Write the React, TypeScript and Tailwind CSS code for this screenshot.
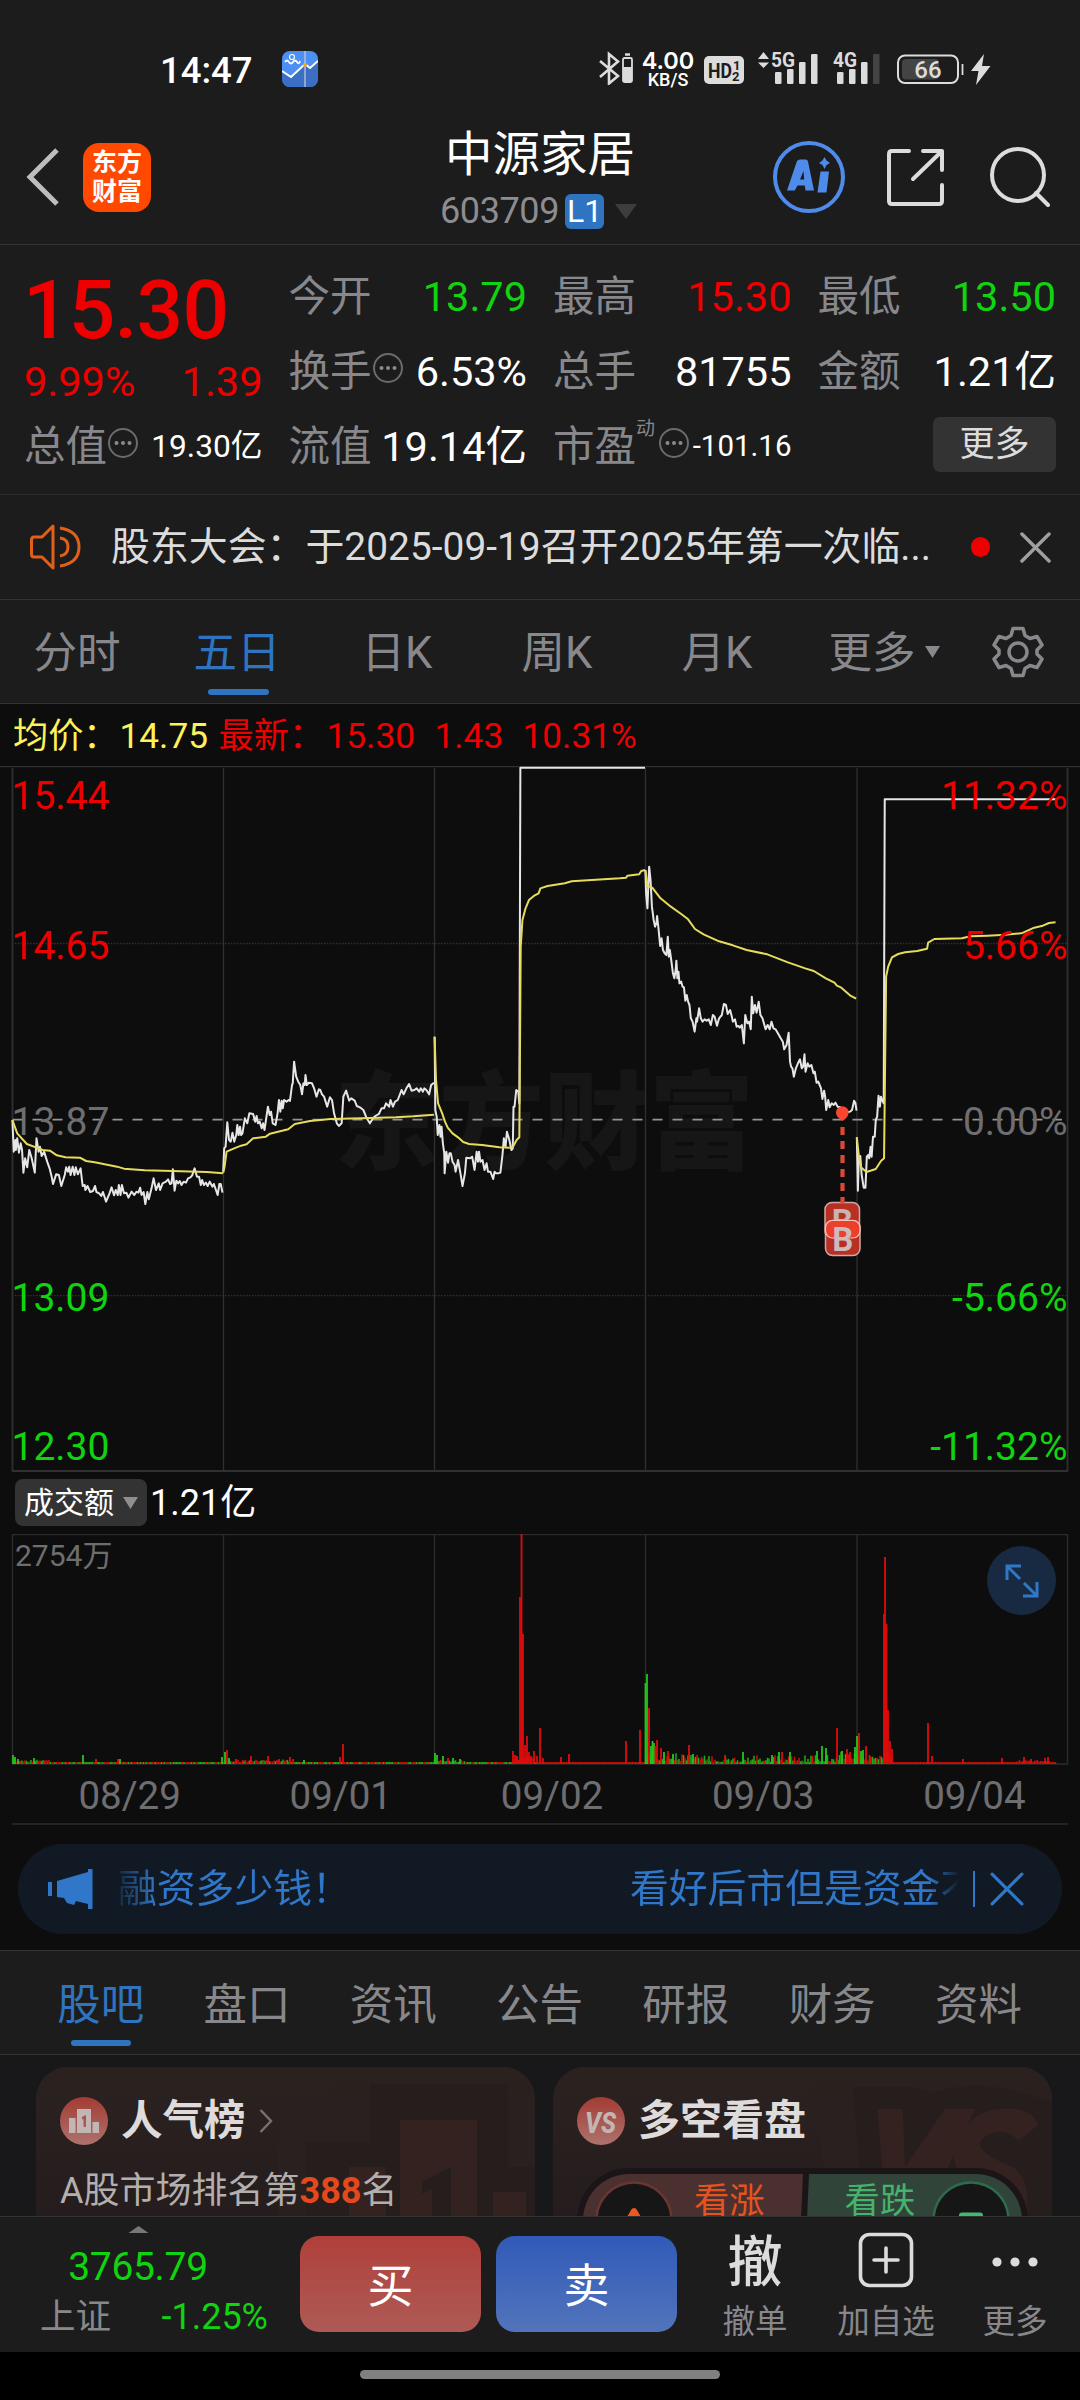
import React from "react";

const UP = "#ee0000";
const DOWN = "#0fd40f";

/* ---------- small drawings ---------- */

function Dots({ className = "" }: { className?: string }) {
  return (
    <svg viewBox="0 0 32 32" className={`h-8 w-8 shrink-0 ${className}`} fill="none">
      <circle cx="16" cy="16" r="14" stroke="#6b6b6e" strokeWidth="2" />
      <g fill="#8a8a8e">
        <circle cx="9.5" cy="16" r="2" />
        <circle cx="16" cy="16" r="2" />
        <circle cx="22.5" cy="16" r="2" />
      </g>
    </svg>
  );
}

function Close({ className, color, width }: { className: string; color: string; width: number }) {
  return (
    <svg viewBox="0 0 32 32" className={className} fill="none" stroke={color} strokeWidth={width} strokeLinecap="round">
      <path d="M2 2 30 30M30 2 2 30" />
    </svg>
  );
}

function Signal({ label, weak, arrows }: { label: string; weak?: boolean; arrows?: boolean }) {
  return (
    <svg viewBox="0 0 62 34" className="h-[34px] w-[62px] shrink-0 overflow-visible" fill="#dcdcdc">
      {arrows && <path d="M0 8 5.5 1 11 8ZM0 11.500 5.500 17 11 11.500Z" />}
      <text x="13" y="16" fontSize="20" fontWeight="700" textLength="24" lengthAdjust="spacingAndGlyphs">
        {label}
      </text>
      <rect x="17" y="21" width="6.500" height="12" rx="1.200" />
      <rect x="29" y="18" width="6.500" height="15" rx="1.200" />
      <rect x="41" y="11" width="6.500" height="22" rx="1.200" />
      <rect x="53" y="3" width="6.500" height="30" rx="1.200" fill={weak ? "#444" : "#dcdcdc"} />
    </svg>
  );
}

/* ---------- top ---------- */

function StatusBar() {
  return (
    <div className="flex h-[138px] items-start pt-[51px] pl-[160px] text-white">
      <div className="w-[122px] text-[36.500px] leading-[39px] font-medium">14:47</div>
      <svg viewBox="0 0 36 36" className="h-9 w-9">
        <defs>
          <clipPath id="appIcon">
            <rect width="36" height="36" rx="8" />
          </clipPath>
        </defs>
        <g clipPath="url(#appIcon)">
          <rect width="36" height="36" fill="#4d90f5" />
          <path d="M0 20 9 26 23 13 28 17 36 10V36H0Z" fill="#3a6fc4" />
          <path d="M0 20 9 26 23 13 28 17 36 10" fill="none" stroke="#fff" strokeWidth="2" />
          <path d="M23 0V36" stroke="#c9ced6" strokeWidth="1.200" />
          <circle cx="23" cy="14" r="2" fill="#f0a030" />
          <circle cx="10" cy="6" r="2.500" fill="none" stroke="#fff" strokeWidth="1.200" />
          <path d="M3 11q2-3 4 0t4 0 4 0 3-1" fill="none" stroke="#fff" strokeWidth="1.800" />
        </g>
      </svg>
      <svg viewBox="0 0 36 34" className="ml-[280px] h-[34px] w-9" fill="none">
        <path d="M2 10 20 25 11 32.500V3L20 10.500 2 26" stroke="#dcdcdc" strokeWidth="2.600" />
        <rect x="25" y="7" width="9" height="24" rx="1.500" stroke="#dcdcdc" strokeWidth="1.800" />
        <rect x="25" y="16" width="9" height="15" fill="#dcdcdc" />
        <path d="M27 3.500H32" stroke="#dcdcdc" strokeWidth="2.500" />
      </svg>
      <div className="ml-[7px] flex w-[54px] flex-col items-center">
        <span className="font-[Inter] text-[23.500px] leading-[20px] font-semibold">4.00</span>
        <span className="text-[18px] leading-[18px] font-medium">KB/S</span>
      </div>
      <svg viewBox="0 0 40 28" className="mt-[5px] ml-[9px] h-7 w-10 shrink-0">
        <rect width="40" height="28" rx="5" fill="#dcdcdc" />
        <g fill="#1c1c1c" fontWeight="700">
          <text x="4" y="22" fontSize="21" textLength="24" lengthAdjust="spacingAndGlyphs">HD</text>
          <text x="29" y="13.500" fontSize="13">1</text>
          <text x="28" y="25" fontSize="13">2</text>
        </g>
      </svg>
      <div className="ml-[14px] flex">
        <Signal label="5G" arrows />
        <Signal label="4G" weak />
      </div>
      <svg viewBox="0 0 100 34" className="ml-[14px] h-[34px] w-[100px] shrink-0" fill="none">
        <rect x="2" y="4.500" width="60" height="27.500" rx="7" stroke="#dcdcdc" strokeWidth="2" />
        <rect x="6" y="8" width="37" height="20.500" rx="4" fill="#444" />
        <path d="M66.500 13V24" stroke="#dcdcdc" strokeWidth="1.800" />
        <text x="32" y="27" textAnchor="middle" fill="#dcdcdc" fontSize="24" fontWeight="500">66</text>
        <path d="M88 3 75 20H82.500L80 34 94.500 15H86Z" fill="#dcdcdc" />
      </svg>
    </div>
  );
}

function Header() {
  return (
    <div className="flex h-[106px] items-start">
      <svg viewBox="0 0 34 58" className="mt-[10px] ml-[26px] h-[58px] w-[34px]" fill="none">
        <path d="M31 2 4 29 31 56" stroke="#bdbdbd" strokeWidth="5" />
      </svg>
      <div className="mt-[5px] ml-[23px] flex h-[69px] w-[68px] flex-col items-center justify-center rounded-2xl bg-[#ff4800] text-[25px] leading-[29px] font-bold text-white">
        <span className="-mt-[2px]">东方</span>
        <span>财富</span>
      </div>
      <div className="ml-[239px] flex w-[300px] flex-col items-center">
        <div className="-mt-[13px] text-[47.500px] leading-[60px] text-white">中源家居</div>
        <div className="mt-[8px] -ml-[3px] flex h-[36px] items-center">
          <span className="text-[36px] leading-9 tracking-[-0.400px] text-[#8c8c91]">603709</span>
          <span className="ml-[6px] flex h-[35px] w-[39px] items-center justify-center rounded-[6px] bg-[#2f74c0] text-[32px] leading-[35px] text-white">
            L1
          </span>
          <svg viewBox="0 0 22 15" className="ml-[11px] h-[15px] w-[22px]">
            <path d="M0 0H22L11 15Z" fill="#3d3d3d" />
          </svg>
        </div>
      </div>
      <svg viewBox="0 0 74 74" className="mt-[2px] ml-[81.500px] h-[74px] w-[74px] shrink-0" fill="none">
        <circle cx="37" cy="37" r="34" stroke="#4f8bea" strokeWidth="4" />
        <path
          fillRule="evenodd"
          d="M25 21Q26 19.500 28 19.500H33.500Q35.500 19.500 36 21.500L42 50.500H33.500L32.800 45.500H25.500L22.800 50.500H15ZM31.500 31 28 39.500H32.200Z"
          fill="#4f8bea"
        />
        <path d="M48.500 31.500H57L54.500 52.500H45.500ZM52.500 17 54.500 20.500 58 23 54.500 25 52.500 29 50.500 25 47 23 50.500 20.500Z" fill="#4f8bea" />
      </svg>
      <svg viewBox="0 0 62 62" className="mt-[9px] ml-[39.500px] h-[62px] w-[62px] shrink-0" fill="none" stroke="#dcdcdc" strokeWidth="4" strokeLinecap="round" strokeLinejoin="round">
        <path d="M24 4H7Q4 4 4 7V54Q4 57 7 57H54Q57 57 57 54V38M38 4H57V23M56 5 28 32" />
      </svg>
      <svg viewBox="0 0 62 62" className="mt-[9px] ml-[41px] h-[62px] w-[62px] shrink-0" fill="none" stroke="#dcdcdc" strokeWidth="4" strokeLinecap="round">
        <circle cx="30" cy="28" r="26" />
        <path d="M48 46 60 58" />
      </svg>
    </div>
  );
}

function Field({ label, value, color = "#fff", info, sup, size = 41.5 }: { label: string; value: string; color?: string; info?: boolean; sup?: string; size?: number }) {
  return (
    <div className="flex h-[75px] items-center justify-between whitespace-nowrap">
      <div className="flex items-center text-[41.500px] leading-none text-[#88888c]">
        {label}
        {sup && <span className="-mt-9 mr-[3px] text-[19px]">{sup}</span>}
        {info && <Dots className="-mt-2" />}
      </div>
      <span className="leading-none" style={{ color, fontSize: size }}>
        {value}
      </span>
    </div>
  );
}

function Quote() {
  return (
    <div className="grid h-[250px] grid-cols-4 gap-[26px] border-t border-[#333] px-[24px] pt-[14px]">
      <div>
        <div className="mt-[10px] -ml-[1px] flex h-[82px] items-center text-[82px] leading-none font-medium tracking-[-0.800px] text-[#ee0000]">15.30</div>
        <div className="mt-[2px] mb-[-2px] flex h-[58px] items-center justify-between text-[41.500px] leading-none text-[#ee0000]">
          <span>9.99%</span>
          <span>1.39</span>
        </div>
        <Field label="总值" value="19.30亿" info size={31.7} />
      </div>
      <div>
        <Field label="今开" value="13.79" color={DOWN} />
        <Field label="换手" value="6.53%" info />
        <Field label="流值" value="19.14亿" />
      </div>
      <div>
        <Field label="最高" value="15.30" color={UP} />
        <Field label="总手" value="81755" />
        <Field label="市盈" value="-101.16" sup="动" info size={29.5} />
      </div>
      <div>
        <Field label="最低" value="13.50" color={DOWN} />
        <Field label="金额" value="1.21亿" />
        <div className="-mt-[2px] flex h-[75px] items-center justify-end">
          <div className="flex h-[55px] w-[123px] items-center justify-center rounded-[7px] bg-[#333] text-[35px] leading-none text-[#dcdcdc]">更多</div>
        </div>
      </div>
    </div>
  );
}

function Notice() {
  return (
    <div className="flex h-[105px] items-center border-t border-[#2a2a2a] pl-[29px]">
      <svg viewBox="0 0 52 46" className="h-[46px] w-[52px]" fill="none" stroke="#e0601a" strokeWidth="3" strokeLinejoin="round">
        <path d="M24 2V44L13 33H5Q2.500 33 2.500 30V16Q2.500 13 5 13H13ZM31 4Q50 7 50 23T31 42M31 14Q39 15 39 23T31 32" />
      </svg>
      <div className="ml-[30px] w-[858px] text-[38.900px] leading-none whitespace-nowrap text-[#dcdcdc]">股东大会：于2025-09-19召开2025年第一次临...</div>
      <div className="ml-[2px] h-5 w-[19px] rounded-full bg-[#ee0000]" />
      <Close className="ml-[30px] h-[31px] w-[31px]" color="#a0a0a0" width={3.5} />
    </div>
  );
}

function ChartTabs() {
  const tabs = ["分时", "五日", "日K", "周K", "月K", "更多"];
  return (
    <div className="flex h-[104px] items-center border-t border-[#333] text-[43.500px] leading-none text-[#88888c]">
      <div className="-ml-[3px] flex h-full">
        {tabs.map((t) => (
          <div key={t} className="relative flex h-full w-[160px] items-center justify-center pt-[4px]">
            <span className={t === "五日" ? "text-[#2f74c0]" : t === "更多" ? "ml-[14px]" : ""}>{t}</span>
            {t === "五日" && <div className="absolute bottom-[8px] left-[51px] h-[6px] w-[61px] rounded-full bg-[#2f74c0]" />}
            {t === "更多" && (
              <svg viewBox="0 0 15 12" className="-mt-[4px] ml-[9px] h-3 w-[15px]">
                <path d="M0 0H15L7.500 12Z" fill="#88888c" />
              </svg>
            )}
          </div>
        ))}
      </div>
      <svg viewBox="0 0 52 52" className="ml-[35px] h-[52px] w-[52px]" fill="none" stroke="#88888c" strokeWidth="3.500" strokeLinejoin="round">
        <path d="M21 2.500H31L33 9.500 38 12.500 45 10.500 50 19 45 24V28L50 33 45 41.500 38 39.500 33 42.500 31 49.500H21L19 42.500 14 39.500 7 41.500 2 33 7 28V24L2 19 7 10.500 14 12.500 19 9.500Z" />
        <circle cx="26" cy="26" r="9" />
      </svg>
    </div>
  );
}

/* ---------- chart ---------- */

const PRICE_LEFT = [
  "36,1080 40,1175 45,1140 46,1170 50,1135 55,1178 60,1150 64,1170 68,1238 73,1195 79,1222 85,1170 92,1195 101,1238 106,1135 112,1175 116,1160 121,1188 128,1175 137,1205 144,1225 150,1250 154,1272 163,1243 171,1245 178,1278 188,1245 192,1222 197,1235 201,1220 205,1245 211,1220 216,1245 220,1222 226,1243 234,1225 240,1278 246,1275 248,1290 254,1278 262,1296 270,1293 276,1278 280,1296 288,1300 294,1308 299,1296 308,1325 318,1300 324,1282 331,1306 336,1290 342,1305 345,1275 350,1305 354,1275 360,1300 367,1298 373,1313 382,1295 390,1305 396,1295 402,1298 407,1283 411,1305 417,1296 422,1332 428,1296 432,1318 440,1285 446,1255 453,1290 461,1270 465,1290 472,1270 482,1265 488,1258 494,1272 498,1270 502,1228 507,1292 512,1262 517,1270 522,1263 527,1275 533,1265 540,1268 546,1255 553,1252 558,1246 565,1225 572,1250 578,1250 583,1275 587,1260 592,1275 598,1268 603,1278 609,1265 617,1280 621,1272 627,1290 632,1305 637,1272 641,1272 646,1298",
  "648,1235 651,1165 655,1160 660,1087 665,1140 670,1145 675,1118 680,1145 686,1125 689,1095 693,1125 697,1100 700,1125 704,1120 711,1075 718,1090 724,1060 735,1062 741,1085 745,1068 749,1090 754,1085 760,1105 764,1090 768,1110 773,1075 778,1040 783,1065 787,1055 792,1090 800,1095 806,1060 810,1020 814,1055 818,1022 821,1045 825,1020 832,1025 838,1020 842,1023 848,975 850,970 854,905 860,950 866,965 872,975 877,1003 881,970 885,975 887,945 891,975 897,968 906,970 912,985 919,1010 926,988 930,990 935,1003 941,1010 950,1040 958,1012 964,1020 970,1060 978,1090 984,1098 992,1090 997,1010 1005,992 1014,1022 1020,1015 1030,1022 1036,1038 1045,1042 1055,1050 1065,1075 1074,1090 1083,1075 1090,1068 1100,1062 1108,1045 1115,1045 1121,1030 1130,1040 1134,1020 1141,1040 1147,1025 1155,1020 1166,990 1172,1003 1180,985 1188,972 1195,992 1203,990 1210,985 1217,995 1222,985 1228,995 1232,985 1238,990 1246,1003 1252,975 1260,968",
  "1262,830 1264,1050 1268,1070 1271,1125 1276,1095 1279,1130 1282,1100 1286,1150 1290,1180 1291,1240 1296,1175 1301,1208 1305,1180 1309,1180 1314,1205 1320,1215 1323,1235 1330,1200 1337,1240 1343,1278 1350,1240 1354,1193 1365,1195 1371,1190 1378,1230 1384,1175 1388,1205 1391,1175 1395,1205 1401,1200 1407,1230 1413,1210 1417,1235 1424,1235 1432,1257 1436,1235 1440,1240 1447,1240 1453,1238 1459,1185 1463,1135 1468,1160 1472,1115 1479,1140 1485,1170 1489,1165 1491,1040 1494,1040 1499,990 1505,995 1508,1030 1511,23 1873,23",
];
const AVG_LEFT = [
  "36,1080 50,1120 78,1152 106,1163 124,1170 145,1172 165,1186 190,1192 232,1193 250,1203 275,1207 340,1220 360,1226 420,1231 500,1233 600,1236 648,1240",
  "648,1238 652,1220 658,1175 680,1165 700,1157 716,1153 735,1135 772,1130 784,1121 837,1108 856,1092 900,1083 960,1077 1050,1075 1150,1072 1200,1069 1260,1064",
  "1262,830 1266,960 1272,1030 1284,1060 1292,1085 1300,1103 1314,1120 1330,1132 1345,1146 1362,1152 1400,1155 1450,1162 1480,1163 1490,1160 1500,1140 1508,1132 1512,560 1517,480 1526,445 1536,420 1550,408 1564,400 1569,385 1590,378 1640,370 1660,364 1800,355 1818,353 1822,347 1856,343 1862,333 1873,330",
];
const PRICE_RIGHT = [
  "306,330 308,400 312,445 314,390 317,320 321,360 325,440 330,480 334,500 338,490 340,468 344,505 349,558 353,535 357,570 362,580 367,585 371,530 374,590 377,570 381,600 386,640 390,655 394,630 396,602 399,655 402,635 405,670 410,665 414,680 418,682 422,722 426,705 430,725 434,735 438,775 443,785 449,815 454,775 456,785 462,745 467,775 472,785 478,778 484,782 490,778 496,795 502,765 507,770 514,797 520,775 528,765 534,732 540,735 545,762 552,750 557,770 560,785 566,778 571,800 576,798 580,803 586,795 592,850 596,765 602,790 607,785 612,808 615,710 619,760 624,735 629,758 635,725 640,765 646,775 655,808 661,795 667,808 672,785 678,805 684,808 692,822 699,835 705,845 709,868 716,855 722,818 726,905 729,920 733,925 737,950 743,925 749,910 755,898 760,925 764,920 768,883 771,935 777,910 782,920 788,915 794,940 798,935 803,968 808,965 812,975 816,985 820,1017 825,992 828,1010 831,1050 837,1020 841,1042 847,1030 853,1035 858,1028 864,1040 872,1042 878,1050 890,1058 900,1055 906,1050 912,1022 916,1030 919,1052",
  "920,1132 923,1292 926,1190 930,1188 934,1245 940,1283 945,1283 949,1190 953,1185 956,1195 960,1160 963,1190 967,1130 972,1130 975,1080 979,1070 983,1007 987,1040 990,1010 993,1020 998,1030 1001,118 1498,118",
];
const AVG_RIGHT = [
  "306,330 312,378 326,383 350,415 380,440 410,462 430,478 450,507 475,523 520,544 560,556 600,570 660,583 720,607 770,625 795,633 830,655 855,668 862,677 875,683 900,706 918,716",
  "920,1132 926,1190 932,1222 948,1236 975,1227 990,1203 999,1195 1005,650 1011,620 1022,592 1040,582 1060,577 1095,573 1124,566 1127,548 1145,537 1225,535 1250,529 1300,527 1350,524 1398,520 1435,503 1460,497 1478,489 1497,487",
];

const GRID_X = [223.5, 434.5, 645.5, 857];

function Lines({ data, color }: { data: string[]; color: string }) {
  return (
    <>
      {data.map((points) => (
        <polyline key={points.slice(0, 12)} points={points} fill="none" stroke={color} strokeWidth="2" strokeLinejoin="round" vectorEffect="non-scaling-stroke" />
      ))}
    </>
  );
}

function PriceChart() {
  const left: [string, number, string][] = [
    ["15.44", 809.3, UP],
    ["14.65", 959.3, UP],
    ["13.87", 1134.7, "#6e6e70"],
    ["13.09", 1310.7, DOWN],
    ["12.30", 1460, DOWN],
  ];
  const right: [string, number, string][] = [
    ["11.32%", 809.3, UP],
    ["5.66%", 959.3, UP],
    ["0.00%", 1134.7, "#6e6e70"],
    ["-5.66%", 1310.7, DOWN],
    ["-11.32%", 1460, DOWN],
  ];
  return (
    <svg viewBox="0 766 1080 707" className="block h-[707px] w-[1080px]">
      <text x="334" y="1161" fontSize="107" fontWeight="900" fill="#161616" textLength="420" lengthAdjust="spacingAndGlyphs">东方财富</text>
      <g stroke="#303030" strokeWidth="1.300" fill="none">
        <path d="M0 766.500H1080" />
        {GRID_X.map((x) => (
          <path key={x} d={`M${x} 768V1471`} />
        ))}
        <path d="M12.500 768V1471H1067.500V768" strokeWidth="1.800" />
        <path d="M12 943.500H1067M12 1295.700H1067" strokeDasharray="1.500 1.500" />
      </g>
      <path d="M12.500 1119.700H1062" stroke="#959595" strokeWidth="1.700" strokeDasharray="10 10" />
      <g transform="translate(0 760) scale(.34439 .33333)">
        <Lines data={PRICE_LEFT} color="#e6e6e6" />
        <Lines data={AVG_LEFT} color="#e6dc5c" />
      </g>
      <g transform="translate(540 760) scale(.34439 .33333)">
        <Lines data={PRICE_RIGHT} color="#e6e6e6" />
        <Lines data={AVG_RIGHT} color="#e6dc5c" />
      </g>
      <g fontSize="39">
        {left.map(([t, y, c]) => (
          <text key={t} x="11.500" y={y} fill={c}>{t}</text>
        ))}
        {right.map(([t, y, c]) => (
          <text key={t} x="1067.500" y={y} fill={c} textAnchor="end">{t}</text>
        ))}
      </g>
      <path d="M842.500 1121Q836 1117 836 1112.500A6.300 6.300 0 0 1 848.600 1112.500Q848.600 1117 842.500 1121Z" fill="#fb4632" />
      <rect x="825" y="1202.500" width="34.500" height="36" rx="7" fill="#b83024" stroke="#cfa8a4" strokeWidth="1.500" />
      <text x="842.300" y="1232.500" textAnchor="middle" fontSize="33" fontWeight="700" fill="#c9b4b4">B</text>
      <path d="M842.500 1127V1204" stroke="#dd4836" strokeWidth="4.200" strokeDasharray="8 6" />
      <rect x="825.500" y="1220.500" width="34.500" height="35" rx="7" fill="#b83024" stroke="#cfa8a4" strokeWidth="1.500" />
      <rect x="825.500" y="1220.500" width="34.500" height="17.500" rx="7" fill="#ee3e2c" stroke="#f3c5be" strokeWidth="1.200" />
      <text x="842.800" y="1250.500" textAnchor="middle" fontSize="33" fontWeight="700" fill="#cdbaba">B</text>
    </svg>
  );
}

/* Turnover bars: [x, height, rising?] for the bars that stand out of the floor. */
const SPIKES: [number, number, boolean][] = [
  [13, 9, false], [15, 7, false], [18, 5, false], [34, 6, false], [83, 9, false], [96, 5, true], [118, 5, true], [120, 5, false],
  [222, 7, false], [225, 12, false], [227, 14, true], [229, 6, false], [236, 5, true], [251, 8, true], [268, 8, true], [279, 5, true], [290, 7, true], [293, 5, true],
  [304, 4, false], [340, 7, true], [343, 20, true],
  [435, 11, false], [437, 9, false], [443, 8, false], [448, 6, true], [453, 6, false], [460, 5, false],
  [513, 13, true], [515, 9, true], [517, 8, true], [520, 167, true], [521.5, 230, true], [523, 130, true], [525, 19, true], [527, 28, true], [529, 12, true], [531, 8, true], [534, 13, true], [537, 8, true], [540, 36, true],
  [543, 6, true], [561, 7, true], [569, 10, true], [626, 23, true], [640, 34, true],
  [645.5, 81, false], [647, 90, false], [649, 56, true], [651, 18, false], [652.5, 23, false], [654, 21, false], [655.5, 18, true], [657, 24, true], [661, 16, true], [664, 12, false], [668, 13, true], [673, 10, false],
  [689, 19, true], [693, 10, false], [725, 9, true], [743, 12, false], [772, 9, false], [779, 12, false], [782, 12, true], [790, 12, false],
  [817, 13, false], [822, 18, false], [826, 16, false], [837, 36, true], [842, 13, false], [847, 15, true], [850, 12, true],
  [855, 17, false], [857, 28, false], [859, 31, true], [861, 13, false], [863, 14, false], [866, 18, true], [870, 8, true],
  [884, 150, true], [885, 207, true], [886.5, 140, true], [888, 54, true], [890, 23, true], [892, 15, true],
  [928, 41, true], [932, 8, true], [963, 5, true], [1002, 6, true], [1024, 7, true], [1031, 5, true], [1045, 6, true], [1048, 7, true],
];

type Bar = { x: number; h: number; up: boolean };

function floorBars(): Bar[] {
  const bars: Bar[] = [];
  for (let i = 0; 13 + i * 1.5 < 1056; i++) {
    const x = 13 + i * 1.5;
    const r = Math.abs(Math.sin(i * 12.9898) * 43758.5453) % 1;
    const s = Math.abs(Math.sin(i * 78.233) * 12543.123) % 1;
    let h = 2;
    let up = s > 0.5;
    if (x < 50 || (x > 223 && x < 290) || (x > 434 && x < 465)) h = 2 + r * 2.5;
    if (x > 515 && x < 535) { h = 4 + r * 5; up = true; }
    else if (x > 535 && x < 645) up = true;
    if (x > 645 && x < 700) { h = 3 + r * 8; up = s > 0.65; }
    else if (x >= 700 && x < 855) { h = 2 + r * r * 7; up = s > 0.6; }
    if (x > 840 && x < 858) { h = 5 + r * 8; up = s > 0.35; }
    else if (x >= 858 && x < 884) h = 3 + r * 6;
    if (x > 884) { up = true; h = x < 893 ? 15 - (x - 885) * 1.3 : 2; }
    if (x > 1015 && x < 1050) h = 2 + r * 2;
    bars.push({ x, h, up });
  }
  return bars;
}

function VolumeChart() {
  return (
    <div className="relative">
      <svg viewBox="0 1534 1080 231" className="block h-[231px] w-[1080px]">
        <g stroke="#2b2b2b" strokeWidth="1.400" fill="none">
          <path d="M12.500 1764V1534.500H1067.500V1764Z" />
          {GRID_X.map((x) => (
            <path key={x} d={`M${x} 1534V1764`} />
          ))}
        </g>
        <text x="15" y="1566" fontSize="30" fill="#6e6e70">2754万</text>
        {floorBars().map((b) => (
          <rect key={b.x} x={b.x - 0.75} y={1764 - b.h} width="1.500" height={b.h} fill={b.up ? "#d80d08" : "#1fae12"} />
        ))}
        {SPIKES.map(([x, h, up]) => (
          <rect key={x} x={x - 0.9} y={1764 - h} width="1.800" height={h} fill={up ? "#e00c0c" : "#22c61a"} />
        ))}
      </svg>
      <div className="absolute top-[12px] right-[24px] flex h-[69px] w-[69px] items-center justify-center rounded-full bg-[#182a41]">
        <svg viewBox="0 0 34 34" className="h-[34px] w-[34px]" fill="none" stroke="#3077c9" strokeWidth="3">
          <path d="M16 2H2V16M2 2 15 15M18 32H32V18M32 32 19 19" />
        </svg>
      </div>
    </div>
  );
}

function Chart() {
  return (
    <div className="h-[1247px] border-t border-[#333] bg-[#0d0d0d]">
      <div className="flex h-[62px] items-center pt-[4px] pl-[13px] text-[35.200px] leading-none whitespace-nowrap text-[#fdf25a]">
        <span>均价：</span>
        <span className="ml-[1px] w-[99px]">14.75</span>
        <span className="flex text-[#ee0000]">
          <span className="w-[108px]">最新：</span>
          <span className="w-[108px]">15.30</span>
          <span className="w-[88px]">1.43</span>
          <span>10.31%</span>
        </span>
      </div>
      <PriceChart />
      <div className="flex h-[61px] items-center pb-[2px] pl-[15px]">
        <div className="flex h-[47px] w-[132px] items-center rounded-[8px] bg-[#333] pl-[9px] text-[30px] leading-none text-white">
          成交额
          <svg viewBox="0 0 15 12" className="ml-[9px] h-3 w-[15px]">
            <path d="M0 0H15L7.500 12Z" fill="#8e8e93" />
          </svg>
        </div>
        <span className="ml-[3px] text-[36px] leading-none text-white">1.21亿</span>
      </div>
      <VolumeChart />
      <div className="grid h-[60px] grid-cols-5 items-center pt-[2px] pl-6 text-center text-[38.500px] leading-none text-[#6e6e70]">
        {["08/29", "09/01", "09/02", "09/03", "09/04"].map((d) => (
          <span key={d}>{d}</span>
        ))}
      </div>
      <div className="mx-3 -mt-[2px] h-[2px] bg-[#242424]" />
      <div className="mx-[18px] mt-[19px] flex h-[90px] items-center rounded-[45px] bg-[#111a24] text-[#3077c9]">
        <svg viewBox="0 0 46 40" className="ml-[30px] h-10 w-[46px] shrink-0" fill="#3077c9">
          <path d="M0 13H4V27H0ZM9 12 40 3V0H44.500V40H40V35L28 32 26 36 19 34 16 29 9 28Z" />
        </svg>
        <div className="ml-[17px] flex w-[848px] shrink-0 overflow-hidden text-[38.800px] leading-[48px] whitespace-nowrap [mask-image:linear-gradient(to_right,transparent,black_45px,black_96.500%,transparent_100%)]">
          <span className="ml-[7px] w-[512px] shrink-0">融资多少钱！</span>
          <span className="shrink-0">看好后市但是资金不足</span>
        </div>
        <div className="ml-[14px] h-9 w-[1.500px] shrink-0 bg-[#3077c9]" />
        <Close className="ml-[15px] h-[34px] w-[34px] shrink-0" color="#3077c9" width={3} />
      </div>
    </div>
  );
}

/* ---------- lower sections ---------- */

function SectionTabs() {
  return (
    <div className="flex h-[104px] items-center border-t border-[#333] pl-[27.500px] text-[43.500px] leading-none text-[#88888c]">
      {["股吧", "盘口", "资讯", "公告", "研报", "财务", "资料"].map((t, i) => (
        <div key={t} className="relative flex h-full w-[146.300px] items-center justify-center pt-[7px]">
          <span className={i === 0 ? "text-[#2f74c0]" : ""}>{t}</span>
          {i === 0 && <div className="absolute bottom-[8px] left-[43.500px] h-[6px] w-[60px] rounded-full bg-[#2f74c0]" />}
        </div>
      ))}
    </div>
  );
}

function Cards() {
  return (
    <div className="flex h-[162px] gap-[18px] overflow-hidden border-t border-[#333] bg-[#18181a] pt-3 pl-9">
      <div className="relative h-[220px] w-[499px] shrink-0 overflow-hidden rounded-[32px] bg-linear-to-b from-[#2b2220] to-[#221b1c]">
        <svg viewBox="0 0 499 150" className="absolute top-0 left-0 h-[150px] w-[499px]">
          <path d="M242 38H298V0H499V150H242Z" fill="#2c2120" opacity=".6" />
          <path d="M270 75H334V17H472V100H499V150H270Z" fill="#261d1d" />
          <path d="M364 150V53H441V150H415V100L386 115V127L396 122V150ZM313 100H350V150H313ZM457 125H490V150H457Z" fill="#342220" />
        </svg>
        <div className="relative flex h-[107px] items-center pl-6">
          <svg viewBox="0 0 48 48" className="h-12 w-12">
            <defs>
              <linearGradient id="badge" x1="0" y1="0" x2="0" y2="1">
                <stop offset="0" stopColor="#a33c34" />
                <stop offset="1" stopColor="#ae726d" />
              </linearGradient>
            </defs>
            <circle cx="24" cy="24" r="24" fill="url(#badge)" />
            <path fillRule="evenodd" d="M17 12H31V36H17ZM22 20V22.500L23.500 22V30H26V18ZM9 21H15.500V36H9ZM32.500 25H39V36H32.500Z" fill="#c2b6b5" />
          </svg>
          <span className="ml-[13px] text-[41.500px] leading-none font-bold text-[#dfdbdb]">人气榜</span>
          <svg viewBox="0 0 14 24" className="ml-[13px] h-6 w-[14px]" fill="none" stroke="#77706f" strokeWidth="2.500">
            <path d="M1.500 1 12 12 1.500 23" />
          </svg>
        </div>
        <div className="relative mt-[1px] flex h-[32px] items-center pl-6 text-[36px] leading-none text-[#b3afaf]">
          A股市场排名第<span className="font-bold text-[#e5481c]">388</span>名
        </div>
      </div>

      <div className="relative h-[220px] w-[499px] shrink-0 overflow-hidden rounded-[32px] bg-linear-to-b from-[#2b2220] to-[#221b1c]">
        <svg viewBox="0 0 499 150" className="absolute top-0 left-0 h-[150px] w-[499px]">
          <path d="M260 0H499V150H275Z" fill="#2c2120" opacity=".6" />
          <path d="M300 20H360L380 26Q430 8 499 36V150H310Z" fill="#261d1d" />
          <path d="M324 42H350L352 100 392 42H422L372 150H334ZM485 58 466 74Q450 58 432 70T460 100Q478 112 474 150H420L400 90Q410 45 445 42T485 58Z" fill="#332220" />
        </svg>
        <div className="relative flex h-[107px] items-center pl-6">
          <svg viewBox="0 0 48 48" className="h-12 w-12">
            <circle cx="24" cy="24" r="24" fill="url(#badge)" />
            <text x="23.500" y="35.500" textAnchor="middle" fontSize="30" fontWeight="800" fontStyle="italic" fill="#c2b6b5" textLength="31" lengthAdjust="spacingAndGlyphs">VS</text>
          </svg>
          <span className="ml-[13px] text-[42px] leading-none font-bold text-[#dfdbdb]">多空看盘</span>
        </div>
        <div className="relative -mt-[6px] ml-[24px] h-[104px] w-[451px] rounded-[52px] bg-[#1b1517] p-[6px]">
          <svg viewBox="0 0 439 92" className="absolute top-[6px] left-[6px] h-[92px] w-[439px]">
            <path d="M46 0H220L216 92H46A46 46 0 0 1 46 0Z" fill="#4a312f" />
            <path d="M226 0H393A46 46 0 0 1 393 92H222Z" fill="#31443a" />
            <circle cx="51" cy="46" r="37.500" fill="#161616" stroke="#6b3631" strokeWidth="2.500" />
            <circle cx="388" cy="46" r="37.500" fill="#161616" stroke="#2f6a4c" strokeWidth="2.500" />
            <path d="M51 34Q53 34 54 36L62 50H40L48 36Q49 34 51 34Z" fill="#ee5722" />
            <rect x="376" y="38.500" width="24" height="20" rx="3" fill="#3fba70" />
          </svg>
          <div className="relative flex h-[55px] items-center text-[35.300px] leading-none">
            <span className="ml-[111px] text-[#e55320]">看涨</span>
            <span className="ml-[80px] text-[#45b36b]">看跌</span>
          </div>
        </div>
      </div>
    </div>
  );
}

function BottomBar() {
  return (
    <div className="flex h-[136px] items-start border-t border-[#333] bg-[#1c1c1c]">
      <div className="flex w-[276px] flex-col items-center pt-[9px]">
        <svg viewBox="0 0 20 7" className="h-[7px] w-[21px]">
          <path d="M0 7 10 0 20 7Z" fill="#77777b" />
        </svg>
        <span className="mt-[14px] text-[39px] leading-[40px] tracking-[-0.300px] text-[#0fd40f]">3765.79</span>
        <div className="mt-[10px] flex w-full items-center justify-between pr-[8px] pl-[40px] leading-[40px]">
          <span className="text-[35.500px] text-[#88888c]">上证</span>
          <span className="text-[36px] text-[#0fd40f]">-1.25%</span>
        </div>
      </div>
      <div className="mt-[19px] ml-[24px] flex h-24 w-[181px] items-center justify-center rounded-[19px] bg-linear-to-b from-[#b03f3a] to-[#ae5a56] pt-[4px] text-[46px] leading-none text-white">买</div>
      <div className="mt-[19px] ml-[15px] flex h-24 w-[181px] items-center justify-center rounded-[19px] bg-linear-to-b from-[#305ab8] to-[#5374bb] pt-[4px] text-[46px] leading-none text-white">卖</div>
      <div className="ml-[17px] flex w-[122px] flex-col items-center">
        <div className="flex h-[88px] items-center pt-[2px] text-[55px] leading-none font-medium text-[#dcdcdc]">撤</div>
        <span className="mt-[1px] text-[32.500px] leading-8 text-[#88888c]">撤单</span>
      </div>
      <div className="flex w-[140px] flex-col items-center">
        <div className="flex h-[88px] items-center pt-[2px]">
          <svg viewBox="0 0 56 56" className="-mt-[4px] h-14 w-14" fill="none" stroke="#dcdcdc" strokeWidth="3.600" strokeLinecap="round">
            <rect x="2.500" y="2.500" width="51" height="51" rx="9" />
            <path d="M28 16V40M16 28H40" />
          </svg>
        </div>
        <span className="mt-[1px] text-[32.500px] leading-8 text-[#88888c]">加自选</span>
      </div>
      <div className="flex w-[118px] flex-col items-center">
        <div className="flex h-[88px] items-center">
          <svg viewBox="0 0 48 10" className="mt-[2px] h-[10px] w-12" fill="#dcdcdc">
            <circle cx="6" cy="5" r="4.600" />
            <circle cx="24" cy="5" r="4.600" />
            <circle cx="42" cy="5" r="4.600" />
          </svg>
        </div>
        <span className="mt-[1px] text-[32.500px] leading-8 text-[#88888c]">更多</span>
      </div>
    </div>
  );
}

export default function App() {
  return (
    <div className="h-[2400px] w-[1080px] overflow-hidden bg-[#1c1c1c] font-['Roboto','Noto_Sans_CJK_SC',sans-serif]">
      <StatusBar />
      <Header />
      <Quote />
      <Notice />
      <ChartTabs />
      <Chart />
      <SectionTabs />
      <Cards />
      <BottomBar />
      <div className="flex h-12 justify-center bg-black pt-[18px]">
        <div className="h-[9px] w-[360px] rounded-full bg-[#808080]" />
      </div>
    </div>
  );
}
